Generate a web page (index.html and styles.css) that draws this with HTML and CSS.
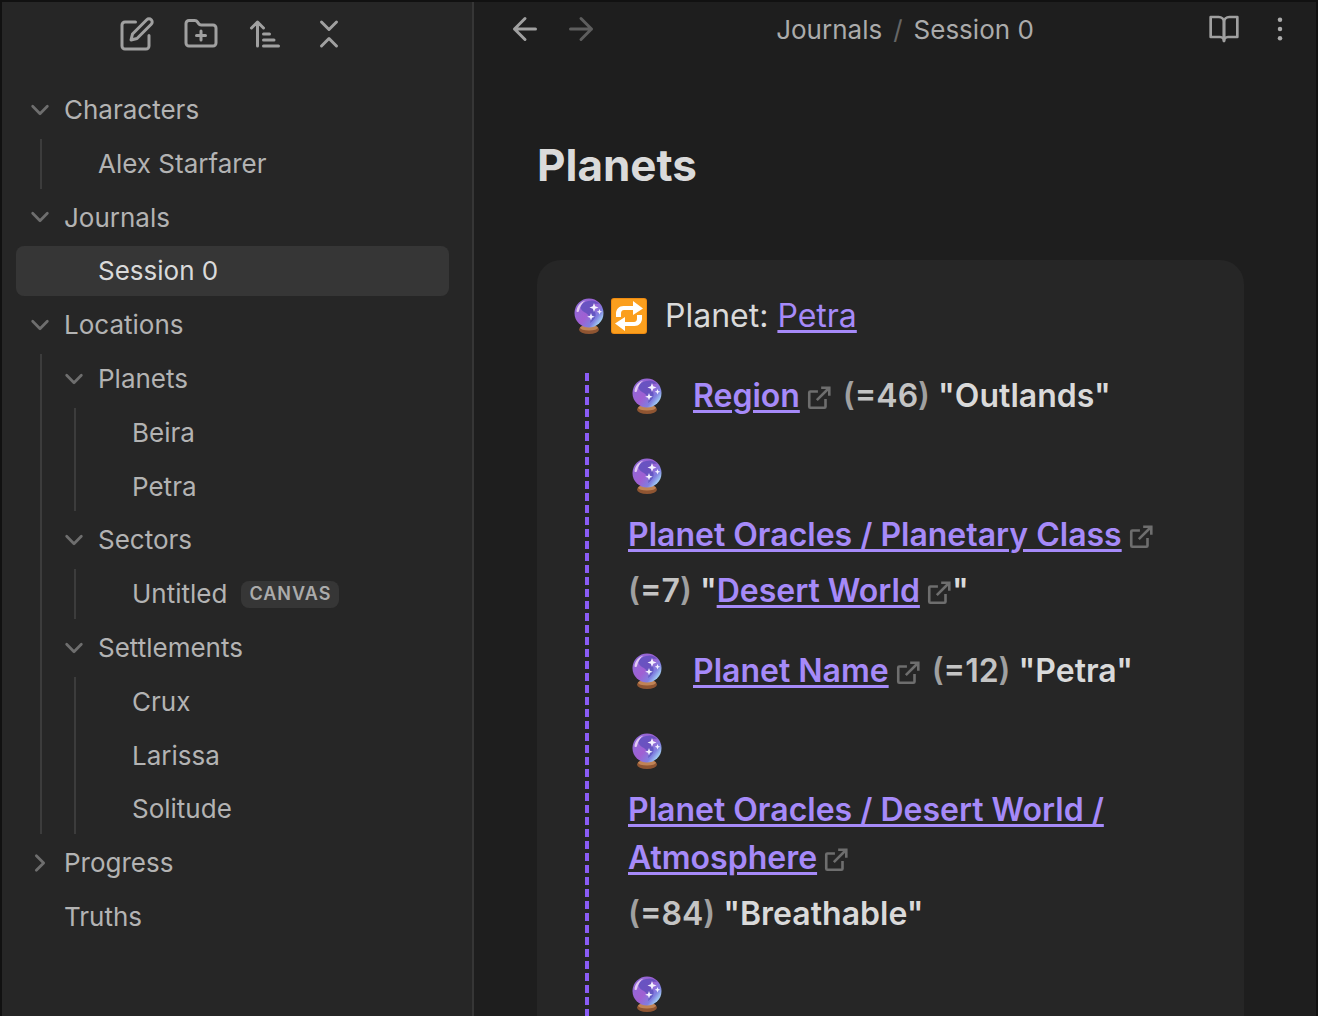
FILE: index.html
```html
<!DOCTYPE html>
<html lang="en">
<head>
<meta charset="utf-8">
<title>Planets</title>
<link rel="stylesheet" href="styles.css">
</head>
<body>
<svg class="defs" aria-hidden="true">
  <defs>
    <linearGradient id="globe" x1="0.1" y1="0.1" x2="0.95" y2="0.75">
      <stop offset="0" stop-color="#8f6bd8"/>
      <stop offset="0.5" stop-color="#a05fd2"/>
      <stop offset="0.8" stop-color="#7f7fe0"/>
      <stop offset="1" stop-color="#a6d6f6"/>
    </linearGradient>
    <symbol id="ball" viewBox="0 0 32 36">
      <ellipse cx="16" cy="31.500" rx="10" ry="4.500" fill="#8f5532"/>
      <ellipse cx="16" cy="29.800" rx="9" ry="2.800" fill="#c08355"/>
      <circle cx="16" cy="15" r="14.500" fill="url(#globe)"/>
      <path d="M15 3c5-1.500 9 0 11 3-5-1-8 2-5 6 3 4 2 9-4 13 2-5-2-9-6-11-3-2-4-4-3-6 1-3 4-4 7-5z" fill="#4a48b4" opacity=".6"/>
      <path d="M3.500 13c.5-5 4-9 9-10.500-3.500 2.500-5.500 6-6.500 10.500-.3 1.300-2.600 1.300-2.500 0z" fill="#f0dcf8" opacity=".85"/>
      <path d="M21 5l1.200 3.300L25.500 9.500l-3.300 1.200L21 14l-1.200-3.300L16.500 9.500l3.300-1.200zM26.500 11l.8 2 2 .8-2 .8-.8 2-.8-2-2-.8 2-.8zM18 15l1 2.800 2.800 1-2.800 1-1 2.800-1-2.800-2.800-1 2.800-1z" fill="#f4f1ff"/>
    </symbol>
    <symbol id="ext" viewBox="0 0 24 24">
      <path d="M18 13v7a1 1 0 0 1-1 1H4a1 1 0 0 1-1-1V7a1 1 0 0 1 1-1h7M14 2.500h7.500V10M21 3 10 14" fill="none" stroke="currentColor" stroke-width="2.400"/>
    </symbol>
    <symbol id="chev" viewBox="0 0 24 24">
      <path d="m4 8 8 8 8-8" fill="none" stroke="currentColor" stroke-width="3" stroke-linecap="round" stroke-linejoin="round"/>
    </symbol>
  </defs>
</svg>
<div class="app">
  <aside class="sidebar">
    <div class="toolbar">
      <svg class="icon" viewBox="0 0 24 24"><path d="M11 4H4a2 2 0 0 0-2 2v14a2 2 0 0 0 2 2h14a2 2 0 0 0 2-2v-7"/><path d="M18.500 2.500a2.120 2.120 0 0 1 3 3L12 15l-4 1 1-4 9.500-9.500z"/></svg>
      <svg class="icon" viewBox="0 0 24 24"><path d="M12 10v6M9 13h6"/><path d="M20 20a2 2 0 0 0 2-2V8a2 2 0 0 0-2-2h-7.900a2 2 0 0 1-1.690-.9L9.600 3.900A2 2 0 0 0 7.930 3H4a2 2 0 0 0-2 2v13a2 2 0 0 0 2 2Z"/></svg>
      <svg class="icon" viewBox="0 0 24 24"><path d="m3 8 4-4 4 4M7 4v16M11 12h4M11 16h7M11 20h10"/></svg>
      <svg class="icon" viewBox="0 0 24 24"><path d="m7 20 5-5 5 5M7 4l5 5 5-5"/></svg>
    </div>
    <nav class="tree">
      <div class="row folder"><svg class="chev"><use href="#chev"/></svg>Characters</div>
      <div class="children">
        <div class="row">Alex Starfarer</div>
      </div>
      <div class="row folder"><svg class="chev"><use href="#chev"/></svg>Journals</div>
      <div class="children">
        <div class="row active">Session 0</div>
      </div>
      <div class="row folder"><svg class="chev"><use href="#chev"/></svg>Locations</div>
      <div class="children">
        <div class="row folder"><svg class="chev"><use href="#chev"/></svg>Planets</div>
        <div class="children">
          <div class="row">Beira</div>
          <div class="row">Petra</div>
        </div>
        <div class="row folder"><svg class="chev"><use href="#chev"/></svg>Sectors</div>
        <div class="children">
          <div class="row">Untitled<span class="badge">CANVAS</span></div>
        </div>
        <div class="row folder"><svg class="chev"><use href="#chev"/></svg>Settlements</div>
        <div class="children">
          <div class="row">Crux</div>
          <div class="row">Larissa</div>
          <div class="row">Solitude</div>
        </div>
      </div>
      <div class="row folder"><svg class="chev closed"><use href="#chev"/></svg>Progress</div>
      <div class="row top-file">Truths</div>
    </nav>
  </aside>
  <main class="main">
    <header class="topbar">
      <div class="nav-btns">
        <svg class="icon" viewBox="0 0 24 24"><path d="m12 19-7-7 7-7M19 12H5"/></svg>
        <svg class="icon dim" viewBox="0 0 24 24"><path d="m12 5 7 7-7 7M5 12h14"/></svg>
      </div>
      <div class="crumbs"><span>Journals</span><span class="sep">/</span><span>Session 0</span></div>
      <div class="actions">
        <svg class="icon book" viewBox="0 0 24 24"><path d="M2 3h6a4 4 0 0 1 4 4v14a3 3 0 0 0-3-3H2z"/><path d="M22 3h-6a4 4 0 0 0-4 4v14a3 3 0 0 1 3-3h7z"/></svg>
        <svg class="dots" viewBox="0 0 24 24"><circle cx="12" cy="5" r="1.700"/><circle cx="12" cy="12" r="1.700"/><circle cx="12" cy="19" r="1.700"/></svg>
      </div>
    </header>
    <div class="doc">
      <h1 class="title">Planets</h1>
      <section class="card">
        <div class="move">
          <svg class="ball-head"><use href="#ball"/></svg>
          <svg class="repeat" viewBox="0 0 36 36"><rect width="36" height="36" rx="3" fill="#ee8a10"/><rect x="1" y="1" width="34" height="34" rx="2" fill="#fb9f1e"/><path d="M5 19v-3.500C5 11.500 8 8 12.500 8H22V3l10 7.500L22 17v-5H13c-2 0-3 1.500-3 3.500V19z" fill="#fff"/><path d="M31 17v3.500C31 24.500 28 28 23.500 28H14v5L4 25.500 14 19v5h9c2 0 3-1.500 3-3.500V17z" fill="#fff"/></svg>
          <span class="move-text">Planet: <a class="link" href="#">Petra</a></span>
        </div>
        <div class="rolls">
          <div class="roll">
            <span class="emoji"><svg><use href="#ball"/></svg></span>
            <span class="term"><a class="link" href="#">Region</a><svg class="ext"><use href="#ext"/></svg></span>
            <span class="result"><span class="num">(<b class="val">=46</b>)</span> "Outlands"</span>
          </div>
          <div class="roll">
            <span class="emoji"><svg><use href="#ball"/></svg></span>
            <span class="term"><a class="link" href="#">Planet Oracles / Planetary Class</a><svg class="ext"><use href="#ext"/></svg></span>
            <span class="result"><span class="num">(<b class="val">=7</b>)</span> "<a class="link" href="#">Desert World</a><svg class="ext"><use href="#ext"/></svg>"</span>
          </div>
          <div class="roll">
            <span class="emoji"><svg><use href="#ball"/></svg></span>
            <span class="term"><a class="link" href="#">Planet Name</a><svg class="ext"><use href="#ext"/></svg></span>
            <span class="result"><span class="num">(<b class="val">=12</b>)</span> "Petra"</span>
          </div>
          <div class="roll">
            <span class="emoji"><svg><use href="#ball"/></svg></span>
            <span class="term"><a class="link" href="#">Planet Oracles / Desert World / Atmosphere</a><svg class="ext"><use href="#ext"/></svg></span>
            <span class="result"><span class="num">(<b class="val">=84</b>)</span> "Breathable"</span>
          </div>
          <div class="roll">
            <span class="emoji"><svg><use href="#ball"/></svg></span>
          </div>
        </div>
      </section>
    </div>
  </main>
</div>
</body>
</html>
```
FILE: styles.css
```css
* { box-sizing: border-box; }
html, body {
  margin: 0;
  height: 100%;
  overflow: hidden;
  background: #111;
  font-family: Inter, "Liberation Sans", sans-serif;
}
.defs { position: absolute; width: 0; height: 0; }
.app {
  display: flex;
  height: 100vh;
  padding: 2px 2px 0;
}
.icon {
  width: 36px;
  height: 36px;
  flex: none;
  fill: none;
  stroke: #a0a0a0;
  stroke-width: 2;
  stroke-linecap: round;
  stroke-linejoin: round;
}
.icon.dim { stroke: #5e5e5e; }

/* Sidebar */
.sidebar {
  width: 472px;
  flex: none;
  background: #262626;
  border-right: 2px solid #363636;
}
.toolbar {
  display: flex;
  justify-content: center;
  gap: 28px;
  padding: 14px 9px 0 0;
  height: 83px;
}
.tree {
  padding: 0 23px 0 14px;
  font-size: 26px;
  line-height: 1.300;
  color: #b3b3b3;
}
.row {
  display: flex;
  align-items: center;
  padding: 8px 0 8px 56px;
  margin-bottom: 4px;
  border-radius: 8px;
}
.tree > .row { padding-left: 48px; }
.row.folder { padding-left: 21px; }
.tree > .row.folder { padding-left: 13px; }
.chev {
  width: 22px;
  height: 22px;
  flex: none;
  margin-right: 13px;
  color: #6e6e6e;
}
.chev.closed { transform: rotate(-90deg); }
.children {
  margin-left: 24px;
  border-left: 2px solid #3c3c3c;
}
.children .children { margin-left: 32px; }
.active {
  margin-left: -26px;
  padding-left: 82px;
  background: #363636;
  color: #dadada;
  position: relative;
}
.badge {
  margin-left: 14px;
  padding: 0 8px;
  height: 27px;
  display: flex;
  align-items: center;
  background: #363636;
  border-radius: 8px;
  font-size: 18px;
  font-weight: 600;
  letter-spacing: 1px;
  color: #ababab;
}

/* Main */
.main {
  flex: 1;
  min-width: 0;
  background: #1e1e1e;
  color: #dadada;
}
.topbar {
  display: flex;
  align-items: center;
  height: 54px;
  padding: 0 20px 0 33px;
}
.nav-btns { display: flex; gap: 20px; }
.crumbs {
  flex: 1;
  display: flex;
  justify-content: center;
  gap: 11px;
  font-size: 26px;
  color: #ababab;
  padding-left: 3px;
}
.sep { color: #666; }
.actions { display: flex; align-items: center; gap: 24px; }
.icon.book { width: 32px; height: 32px; }
.dots { width: 32px; height: 32px; fill: #ababab; }
.doc { padding: 83px 72px 0 64px; }
.title {
  margin: 0 0 68px -1px;
  font-size: 44px;
  line-height: 1.200;
  font-weight: 700;
  color: #dadada;
}
.card {
  margin-left: -1px;
  background: #262626;
  border-radius: 24px 24px 0 0;
  padding: 32px 36px 40px;
  font-size: 32px;
  line-height: 48px;
}
.move {
  display: flex;
  align-items: center;
  height: 48px;
}
.ball-head { width: 32px; height: 36px; flex: none; }
.repeat { width: 36px; height: 36px; flex: none; margin: 0 18px 0 6px; }
.link { color: #a68af9; text-decoration: underline; text-underline-offset: 3px; text-decoration-thickness: 3px; }
.rolls {
  margin: 29px 0 0 12px;
  padding-left: 43px;
  background: repeating-linear-gradient(#8a5cf5 0 8px, transparent 8px 12px) left 4px / 4px 100% no-repeat;
  font-weight: 600;
}
.roll {
  display: flex;
  flex-wrap: wrap;
  align-items: flex-start;
  column-gap: 11px;
  row-gap: 5px;
  margin-bottom: 26px;
}
.emoji {
  width: 54px;
  height: 54px;
  padding-left: 3px;
  display: flex;
  align-items: center;
}
.emoji svg { width: 32px; height: 36px; }
.term { padding-top: 3px; }
.result { padding: 3px 0; }
.num { color: #a0a0a0; }
.val { color: #c4c4c4; font-weight: 600; }
.ext {
  width: 26px;
  height: 26px;
  margin-left: 6px;
  vertical-align: -4px;
  color: #6e6e6e;
}
```
